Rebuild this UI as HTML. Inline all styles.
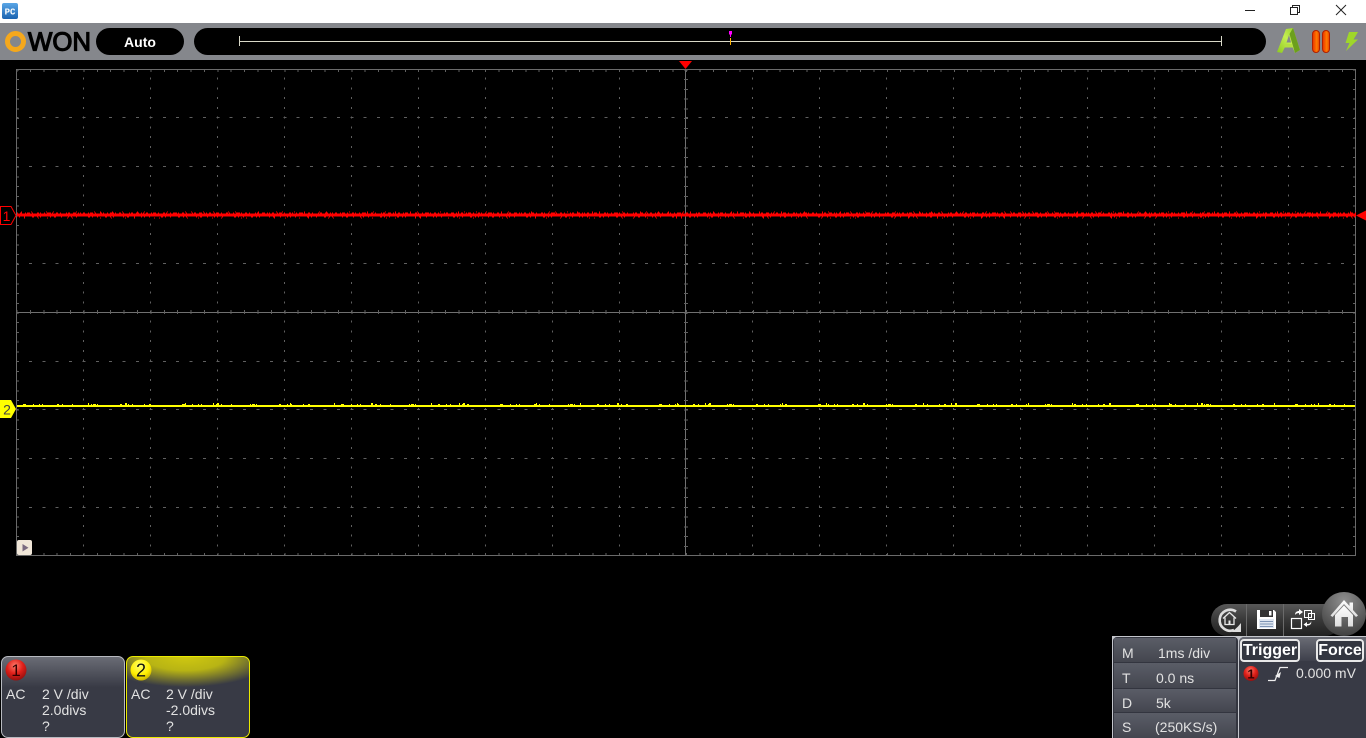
<!DOCTYPE html>
<html><head><meta charset="utf-8"><title>OWON</title>
<style>
html,body{margin:0;padding:0;background:#000;width:1366px;height:738px;overflow:hidden}
body{position:relative;font-family:"Liberation Sans",sans-serif;color:#e8e8e8}
svg{position:absolute;left:0;top:0}
.t{position:absolute;font-size:14px;line-height:16px;white-space:nowrap;color:#e2e2e2}
.ch{position:absolute;top:656px;width:122px;height:80px;border-radius:7px;background:#383a45;overflow:hidden}
.row{position:absolute;left:1114px;width:122px;background:linear-gradient(#5a5d67,#44464f)}
.btn{position:absolute;top:639px;height:19px;border:2px solid #e8e8e8;border-radius:4px;font-weight:bold;font-size:16px;line-height:19px;text-align:center;color:#fff;background:#333640}
</style></head><body>
<div style="position:absolute;left:0;top:0;width:1366px;height:23px;background:#fff"></div>
<div style="position:absolute;left:0;top:23px;width:1366px;height:37px;background:#85878c"></div>
<div style="position:absolute;left:96px;top:28px;width:88px;height:27px;border-radius:14px;background:#000;color:#fff;font-weight:bold;font-size:14px;line-height:28px;text-align:center">Auto</div>
<div style="position:absolute;left:194px;top:28px;width:1072px;height:27px;border-radius:14px;background:#000"></div>

<svg width="1366" height="738" viewBox="0 0 1366 738" shape-rendering="crispEdges">
<path fill="none" stroke="#606060" stroke-width="1" stroke-dasharray="2 7.72" stroke-dashoffset="1" d="M83.5 69V555M150.5 69V555M217.5 69V555M284.5 69V555M351.5 69V555M418.5 69V555M485.5 69V555M552.5 69V555M619.5 69V555M752.5 69V555M819.5 69V555M886.5 69V555M953.5 69V555M1020.5 69V555M1087.5 69V555M1154.5 69V555M1221.5 69V555M1288.5 69V555"/>
<path fill="none" stroke="#606060" stroke-width="1" stroke-dasharray="3 10.39" stroke-dashoffset="1.5" d="M17 117.5H1355M17 166.5H1355M17 215.5H1355M17 263.5H1355M17 361.5H1355M17 409.5H1355M17 458.5H1355M17 507.5H1355"/>
<rect x="16.5" y="69.5" width="1339" height="486" fill="none" stroke="#6a6a6a"/>
<path fill="none" stroke="#606060" stroke-width="2" stroke-dasharray="1 12.39" d="M16.5 71H1355M16.5 554H1355"/>
<path fill="none" stroke="#606060" stroke-width="2" stroke-dasharray="1 8.72" d="M18 69.5V555M1354 69.5V555"/>
<path fill="none" stroke="#707070" d="M685.5 69V555M17 312.5H1355"/>
<path fill="none" stroke="#606060" stroke-width="4" stroke-dasharray="1 8.72" d="M686 69.5V555"/>
<path fill="none" stroke="#606060" stroke-width="4" stroke-dasharray="1 12.39" d="M16.5 312H1355"/>
<g fill="none" stroke="#f00">
<path stroke-width="3" d="M17 215H1356"/>
<path stroke-width="1" stroke-dasharray="1 2 2 3 1 1 3 2 1 4 2 1 1 3 1 2 4 1 1 3 2 2 1 5 1 1 2 3 3 2 1 1" d="M17 213H1356"/>
<path stroke-width="1" stroke-dasharray="1 4 1 7 2 3 1 2 1 9 1 3 2 5 1 6 1 2 1 4 1 11 2 2" d="M19 217H1356"/>
<path stroke-width="1" stroke-dasharray="1 9 1 14 1 6 1 22 1 17 1 5 1 11" d="M21 212H1356"/>
<path stroke-width="1" stroke-dasharray="1 13 1 8 1 19 1 4 1 27 1 10" d="M24 218H1356"/>
</g>
<g fill="none" stroke="#ff0">
<path stroke-width="2" d="M17 406H1355"/>
<path stroke-width="1" stroke-dasharray="3 7 1 5 1 2 1 14 2 3 1 9 1 18 1 1 3 1 1 22 2 6 1 3 1 11 1 4 2 31" d="M23 404.5H1355"/>
<path stroke-width="2" stroke-dasharray="1 36 2 58 1 27 1 3 2 71 1 43" d="M88 404H1355"/>
</g>
</svg>

<svg width="1366" height="738" viewBox="0 0 1366 738">
<defs>
<linearGradient id="pc" x1="0" y1="0" x2="0" y2="1"><stop offset="0" stop-color="#5aa6e6"/><stop offset="1" stop-color="#1a63b0"/></linearGradient>
<radialGradient id="red" cx=".45" cy=".3" r=".75"><stop offset="0" stop-color="#ff7a6a"/><stop offset=".5" stop-color="#e0201a"/><stop offset="1" stop-color="#8a0d0d"/></radialGradient>
<radialGradient id="yel" cx=".45" cy=".3" r=".75"><stop offset="0" stop-color="#ffff70"/><stop offset=".6" stop-color="#ffee00"/><stop offset="1" stop-color="#c0a800"/></radialGradient>
<linearGradient id="pau" x1="0" y1="0" x2="1" y2="0"><stop offset="0" stop-color="#e83000"/><stop offset=".6" stop-color="#ff7a00"/><stop offset="1" stop-color="#e84000"/></linearGradient>
<linearGradient id="ag" x1="0" y1="1" x2="1" y2="0"><stop offset="0" stop-color="#8cc820"/><stop offset=".5" stop-color="#c4ee50"/><stop offset="1" stop-color="#8cc826"/></linearGradient>
<linearGradient id="tb" x1="0" y1="0" x2="0" y2="1"><stop offset="0" stop-color="#585858"/><stop offset=".5" stop-color="#383838"/><stop offset="1" stop-color="#202020"/></linearGradient>
<radialGradient id="hm" cx=".5" cy=".2" r=".85"><stop offset="0" stop-color="#8e8e8e"/><stop offset="1" stop-color="#3c3c3c"/></radialGradient>
<linearGradient id="hs" x1="0" y1="0" x2="0" y2="1"><stop offset="0" stop-color="#fff"/><stop offset="1" stop-color="#ddd"/></linearGradient>
</defs>
<rect x="2" y="3" width="16" height="16" rx="2" fill="url(#pc)"/>
<text x="10" y="14.5" font-size="9" font-weight="bold" fill="#fff" text-anchor="middle" font-family="Liberation Mono,monospace">PC</text>
<g fill="none" stroke="#222" stroke-width="1" shape-rendering="crispEdges">
<path d="M1245 10.5H1255"/>
<rect x="1290.5" y="7.5" width="7" height="7"/>
<path d="M1292.5 7.5V5.5H1299.5V12.5H1297.5"/>
</g>
<path d="M1336 5L1346 15M1346 5L1336 15" stroke="#222" stroke-width="1" fill="none"/>
<circle cx="15.5" cy="41.5" r="8" fill="none" stroke="#f5a81c" stroke-width="5"/>
<text x="28" y="50.5" font-size="26" font-family="Liberation Sans,sans-serif" fill="#000" stroke="#000" stroke-width="1.2" textLength="63" lengthAdjust="spacingAndGlyphs">WON</text>
<g shape-rendering="crispEdges" fill="none">
<path d="M239.5 36V46M1221.5 36V46M240 41.5H1221" stroke="#d8d8c8"/>
<path d="M730.5 38V45" stroke="#ffb400" stroke-width="1"/>
</g>
<path d="M729 31H732V34.5H731V37H730V34.5H729Z" fill="#f0f"/>
<path fill-rule="evenodd" d="M1277 52L1286 29L1293 28L1300 50L1295 53L1292.5 47H1285L1282 53ZM1286.5 42.5H1291L1289 35Z" fill="url(#ag)"/>
<path d="M1293 28L1300 50L1295 53L1289.5 34Z" fill="#6c9f1c"/>
<path d="M1285 44H1292L1293 47.5H1284.5Z" fill="#b4e040"/>
<rect x="1312.5" y="30.5" width="7" height="22" rx="3.5" fill="url(#pau)" stroke="#b02000"/>
<rect x="1322.5" y="30.5" width="7" height="22" rx="3.5" fill="url(#pau)" stroke="#b02000"/>
<path d="M1349 32H1358L1353.5 39.5H1358L1346 51L1349.5 43H1345.5Z" fill="#9fd62a"/>
<path d="M679 61H692L685.5 69Z" fill="#f00"/>
<path d="M1356 215.5L1366 210.5V220.5Z" fill="#f00"/>
<path d="M.5 206.5H11L16 215.5L11 224.5H.5Z" fill="#000" stroke="#f00"/>
<text x="6.5" y="221" font-size="14" fill="#f00" text-anchor="middle">1</text>
<path d="M0 400H11L16 409L11 418H0Z" fill="#ff0"/>
<text x="7" y="414.5" font-size="14" fill="#444" text-anchor="middle">2</text>
<rect x="17" y="540" width="15" height="15" rx="2" fill="#f0e6d8"/>
<path d="M22.5 544V551.5L28.5 547.7Z" fill="#7a6a80"/>
</svg>

<div class="ch" style="left:1px;border:1px solid #b8bac0;background:linear-gradient(#6a6c75,#383a45 38%)"></div>
<div class="ch" style="left:126px;border:1px solid #eaea00;background:radial-gradient(ellipse 88px 30px at 48% 0,#cfc810 0,#b8b414 45%,rgba(56,58,69,0) 100%),#383a45"></div>
<div class="t" style="left:6px;top:686px">AC</div><div class="t" style="left:42px;top:686px">2 V /div</div><div class="t" style="left:42px;top:702px">2.0divs</div><div class="t" style="left:42px;top:718px">?</div>
<div class="t" style="left:131px;top:686px">AC</div><div class="t" style="left:166px;top:686px">2 V /div</div><div class="t" style="left:166px;top:702px">-2.0divs</div><div class="t" style="left:166px;top:718px">?</div>

<div style="position:absolute;left:1112px;top:636px;width:254px;height:102px;background:#c4c6cc"></div>
<div style="position:absolute;left:1113px;top:637px;width:125px;height:101px;background:#33353f;border-radius:4px 4px 0 0"></div>
<div class="row" style="top:638px;height:24px"></div>
<div class="row" style="top:663px;height:25px"></div>
<div class="row" style="top:689px;height:23px"></div>
<div class="row" style="top:713px;height:25px"></div>
<div class="t" style="left:1122px;top:645px">M</div><div class="t" style="left:1158px;top:645px">1ms /div</div>
<div class="t" style="left:1122px;top:670px">T</div><div class="t" style="left:1156px;top:670px">0.0 ns</div>
<div class="t" style="left:1122px;top:695px">D</div><div class="t" style="left:1156px;top:695px">5k</div>
<div class="t" style="left:1122px;top:719px">S</div><div class="t" style="left:1155px;top:719px">(250KS/s)</div>

<div style="position:absolute;left:1239px;top:637px;width:127px;height:101px;background:#383a45;border-radius:5px 0 0 0"></div>
<div style="position:absolute;left:1239px;top:637px;width:127px;height:24px;background:linear-gradient(#6a6c75,#3e404b);border-radius:5px 0 0 0"></div>
<div class="btn" style="left:1240px;width:56px">Trigger</div>
<div class="btn" style="left:1316px;width:44px">Force</div>
<div class="t" style="left:1296px;top:665px">0.000 mV</div>

<svg width="1366" height="738" viewBox="0 0 1366 738">
<circle cx="16" cy="670" r="10.5" fill="url(#red)"/>
<text x="16" y="676" font-size="17" text-anchor="middle" fill="#300">1</text>
<circle cx="141" cy="670" r="10.5" fill="url(#yel)"/>
<text x="141" y="676.5" font-size="18" text-anchor="middle" fill="#111">2</text>
<circle cx="1251" cy="673.5" r="7.5" fill="url(#red)"/>
<text x="1251" y="678.5" font-size="13" font-weight="bold" text-anchor="middle" fill="#300">1</text>
<path d="M1268 680.5H1275L1280 667.5H1288" fill="none" stroke="#eee" stroke-width="1.2"/>
<path d="M1275 676L1281 672L1279.5 678Z" fill="#eee"/>
<rect x="1211" y="604" width="130" height="32" rx="16" fill="url(#tb)"/>
<path d="M1246.5 604V636M1283.5 604V636" stroke="#6a6a6a" shape-rendering="crispEdges"/>
<path d="M1236 611.5A10.5 10.5 0 1 0 1234 630" fill="none" stroke="#ddd" stroke-width="2.6"/>
<path d="M1232 632H1241V623L1238 626.5Z" fill="#ddd"/>
<path d="M1223 618.5L1229.5 612.5L1236 618.5M1225 617.5V624.5H1234V617.5" fill="none" stroke="#e8e8e8" stroke-width="1.3"/>
<rect x="1228.5" y="620.5" width="2" height="4" fill="#e8e8e8"/>
<path d="M1257 610H1274L1276 612V629H1257Z" fill="#fff"/>
<rect x="1260" y="610" width="13" height="7" fill="#333"/>
<rect x="1269" y="611" width="2.5" height="4.5" fill="#fff"/>
<rect x="1259" y="619" width="15" height="9" fill="#dfe6f0"/>
<path d="M1260 621.5H1273M1260 624H1273M1260 626.5H1273" stroke="#7f95b5" shape-rendering="crispEdges"/>
<rect x="1291.5" y="618.5" width="10" height="10" fill="none" stroke="#fff" stroke-width="1.2"/>
<rect x="1304.5" y="610.5" width="7" height="7" fill="none" stroke="#fff"/>
<rect x="1308.5" y="613.5" width="6" height="6" fill="none" stroke="#fff"/>
<path d="M1295 615C1295 612 1297 611 1299 611V609L1303 612L1299 615V613C1297.5 613 1296 613.5 1295 615Z" fill="#fff"/>
<path d="M1311 621C1311 623 1309.5 624 1307 624V622L1303.5 624.5L1307 627V625.5C1310 625.5 1312 624 1311 621Z" fill="#fff"/>
<circle cx="1344" cy="614" r="22" fill="url(#hm)"/>
<path d="M1330.5 615.5L1344 600L1349.5 606V602.5H1353V610L1358 615.5L1356 617L1344 604L1332.5 617Z" fill="url(#hs)"/>
<path d="M1335 615L1344 605.5L1353 615V626.5H1348V617H1341.5V626.5H1335Z" fill="url(#hs)"/>
</svg>
</body></html>
